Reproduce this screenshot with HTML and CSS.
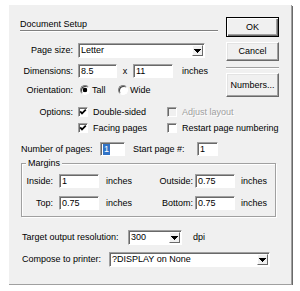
FILE: index.html
```html
<!DOCTYPE html>
<html lang="en">

<head>
    <meta charset="UTF-8">
    <meta name="viewport" content="width=device-width, initial-scale=1.0">
    <title>Document Setup</title>

    <link rel="stylesheet" href="styles.css">

</head>

<body>

    <div class="dialog">

        <div class="top">
            <div class="top-form">
                <div class="title">Document Setup</div>

                <div class="row row-pagesize">
                    <span class="label">Page size:</span>
                    <div class="select w-pagesize">
                        <span>Letter</span>
                        <span class="arrow"><svg width="7" height="4" viewBox="0 0 7 4"><polygon points="0,0 7,0 4,4 3,4" /></svg></span>
                    </div>
                </div>

                <div class="row row-dims">
                    <span class="label">Dimensions:</span>
                    <div class="field w-dim">8.5</div>
                    <span class="times">x</span>
                    <div class="field w-dim">11</div>
                    <span class="unit">inches</span>
                </div>

                <div class="row row-orient">
                    <span class="label">Orientation:</span>
                    <span class="choice"><span class="radio on"></span>Tall</span>
                    <span class="choice"><span class="radio"></span>Wide</span>
                </div>
            </div>

            <div class="buttons">
                <div class="btn btn-default">OK</div>
                <div class="btn btn-cancel">Cancel</div>
                <div class="sep"></div>
                <div class="btn btn-numbers">Numbers...</div>
            </div>
        </div>

        <div class="row row-options">
            <span class="label">Options:</span>
            <span class="item item-wide"><span class="check"><svg width="8" height="8" viewBox="0 0 8 8"><polyline points="1.2,3.4 3,5.4 6.8,1.6" /></svg></span>Double-sided</span>
            <span class="item disabled"><span class="check"></span>Adjust layout</span>
        </div>

        <div class="row row-facing">
            <span class="item item-wide"><span class="check"><svg width="8" height="8" viewBox="0 0 8 8"><polyline points="1.2,3.4 3,5.4 6.8,1.6" /></svg></span>Facing pages</span>
            <span class="item"><span class="check"></span>Restart page numbering</span>
        </div>

        <div class="row row-pages">
            <span class="pages-label">Number of pages:</span>
            <div class="field w-pages"><span class="sel">1</span></div>
            <span class="start-label">Start page #:</span>
            <div class="field w-start">1</div>
        </div>

        <fieldset class="margins">
            <legend>Margins</legend>

            <div class="row m-row">
                <span class="m-label">Inside:</span>
                <div class="field w-margin">1</div>
                <span class="m-unit">inches</span>
                <span class="m-label2">Outside:</span>
                <div class="field w-margin m-field2">0.75</div>
                <span class="m-unit2">inches</span>
            </div>

            <div class="row m-row m-row-top">
                <span class="m-label">Top:</span>
                <div class="field w-margin">0.75</div>
                <span class="m-unit">inches</span>
                <span class="m-label2">Bottom:</span>
                <div class="field w-margin m-field2">0.75</div>
                <span class="m-unit2">inches</span>
            </div>
        </fieldset>

        <div class="row row-target">
            <span class="target-label">Target output resolution:</span>
            <div class="select w-dpi">
                <span>300</span>
                <span class="arrow"><svg width="7" height="4" viewBox="0 0 7 4"><polygon points="0,0 7,0 4,4 3,4" /></svg></span>
            </div>
            <span class="dpi">dpi</span>
        </div>

        <div class="row row-compose">
            <span class="compose-label">Compose to printer:</span>
            <div class="select w-printer">
                <span>?DISPLAY on None</span>
                <span class="arrow"><svg width="7" height="4" viewBox="0 0 7 4"><polygon points="0,0 7,0 4,4 3,4" /></svg></span>
            </div>
        </div>

    </div>

</body>
</html>
```

FILE: styles.css
```css
* {
    padding: 0;
    margin: 0;
    box-sizing: border-box;
}

body {
    background-color: #fff;
    font-family: "Liberation Sans", Arial, sans-serif;
    font-size: 9px;
    line-height: 11px;
    color: #000;
}

.dialog {
    margin: 5px 0 0 9px;
    width: 283px;
    height: 280px;
    background-color: #f0f0f0;
    border-right: 1px solid #a0a0a0;
    border-bottom: 1px solid #a0a0a0;
    box-shadow: 1px 1px 0 #696969;
    padding: 12px 0 0 11px;
}

.top {
    display: flex;
    justify-content: space-between;
}

.top-form {
    width: 198px;
}

.title {
    margin-top: 2px;
    border-bottom: 1px solid #808080;
    box-shadow: 0 1px 0 #fff;
}

.row {
    display: flex;
    align-items: center;
    white-space: nowrap;
}

.label {
    flex: none;
    width: 53px;
    margin-right: 5px;
    text-align: right;
}

.row-pagesize {
    margin-top: 12px;
    height: 15px;
}

.row-dims {
    margin-top: 6px;
    height: 14px;
}

.row-orient {
    margin-top: 5px;
    height: 14px;
}

/* sunken controls */
.field,
.select {
    flex: none;
    display: flex;
    align-items: center;
    background-color: #fff;
    border: 1px solid;
    border-color: #a0a0a0 #fff #fff #a0a0a0;
    box-shadow: inset 1px 1px 0 #696969;
    padding-left: 2px;
}

.field {
    height: 14px;
}

.select {
    height: 15px;
}

.arrow {
    margin-left: auto;
    margin-right: 1px;
    width: 11px;
    height: 11px;
    display: flex;
    align-items: center;
    justify-content: center;
    background-color: #f0f0f0;
    border: 1px solid;
    border-color: #fff #696969 #696969 #fff;
}

.arrow svg {
    shape-rendering: crispEdges;
}

.w-pagesize { width: 127px; }
.w-dim { width: 40px; }
.w-dim:first-of-type { width: 39px; }
.w-pages { width: 25px; }
.w-start { width: 21px; }
.w-margin { width: 40px; }
.w-dpi { width: 54px; }
.w-printer { width: 161px; }

.times {
    width: 16px;
    text-align: center;
}

.unit {
    margin-left: 9px;
}

.choice {
    flex: none;
    width: 38px;
    padding-left: 2px;
    display: flex;
    align-items: center;
}

.radio {
    flex: none;
    width: 10px;
    height: 10px;
    margin-right: 2px;
    border-radius: 50%;
    border: 1px solid;
    border-color: #808080 #fff #fff #808080;
    background: #fff;
    box-shadow: inset 1px 1px 0 #404040;
}

.radio.on {
    background: radial-gradient(circle at 50% 50%, #000 0, #000 2px, #fff 2.6px);
}

/* buttons */
.buttons {
    flex: none;
    width: 53px;
    margin-right: 12px;
}

.btn {
    display: flex;
    align-items: center;
    justify-content: center;
    background-color: #f0f0f0;
    border: 1px solid;
    border-color: #fff #696969 #696969 #fff;
    box-shadow: inset -1px -1px 0 #a0a0a0, inset 1px 1px 0 #e3e3e3;
}

.btn-default {
    height: 20px;
    border-color: #000;
    box-shadow: inset 1px 1px 0 #fff, inset -1px -1px 0 #696969, inset -2px -2px 0 #a0a0a0;
}

.btn-cancel {
    margin-top: 5px;
    height: 19px;
}

.sep {
    margin-top: 6px;
    height: 2px;
    border-top: 1px solid #a0a0a0;
    border-bottom: 1px solid #fff;
}

.btn-numbers {
    margin-top: 4px;
    height: 24px;
}

/* check boxes */
.row-options {
    margin-top: 9px;
    height: 12px;
}

.row-facing {
    margin-top: 4px;
    height: 12px;
    padding-left: 58px;
}

.item {
    display: flex;
    align-items: center;
}

.item-wide {
    width: 89px;
}

.check {
    flex: none;
    width: 10px;
    height: 10px;
    margin-right: 5px;
    display: flex;
    align-items: center;
    justify-content: center;
    background-color: #fff;
    border: 1px solid;
    border-color: #a0a0a0 #fff #fff #a0a0a0;
    box-shadow: inset 1px 1px 0 #696969;
}

.check svg {
    fill: none;
    stroke: #000;
    stroke-width: 1.7;
}

.disabled {
    color: #a0a0a0;
    text-shadow: 1px 1px 0 #fff;
}

.disabled .check {
    background-color: #f0f0f0;
}

/* pages */
.row-pages {
    margin-top: 8px;
    height: 14px;
    padding-left: 1px;
}

.pages-label {
    width: 79px;
}

.start-label {
    width: 64px;
    margin-left: 8px;
}

.sel {
    background-color: #3173c6;
    color: #fff;
    padding: 0 1px;
}

/* margins group */
.margins {
    margin: 2px 0 0 1px;
    width: 255px;
    min-width: 0;
    border: 1px solid #a0a0a0;
    box-shadow: inset 1px 1px 0 #fff, 1px 1px 0 #fff;
    padding: 5px 0 6px 0;
}

.margins legend {
    margin-left: 4px;
    padding: 0 2px;
    line-height: 11px;
    background-color: #f0f0f0;
}

.m-row {
    height: 14px;
}

.m-row-top {
    margin-top: 8px;
}

.m-label {
    width: 31px;
    text-align: right;
}

.m-row .field {
    margin-left: 6px;
}

.m-row .m-field2 {
    margin-left: 2px;
}

.m-unit {
    width: 52px;
    margin-left: 7px;
}

.m-label2 {
    width: 35px;
    text-align: right;
}

.m-unit2 {
    margin-left: 6px;
}

/* bottom rows */
.row-target {
    margin-top: 13px;
    height: 15px;
    padding-left: 2px;
}

.target-label {
    width: 106px;
}

.dpi {
    margin-left: 11px;
}

.row-compose {
    margin-top: 7px;
    height: 15px;
    padding-left: 2px;
}

.compose-label {
    width: 87px;
}
```
